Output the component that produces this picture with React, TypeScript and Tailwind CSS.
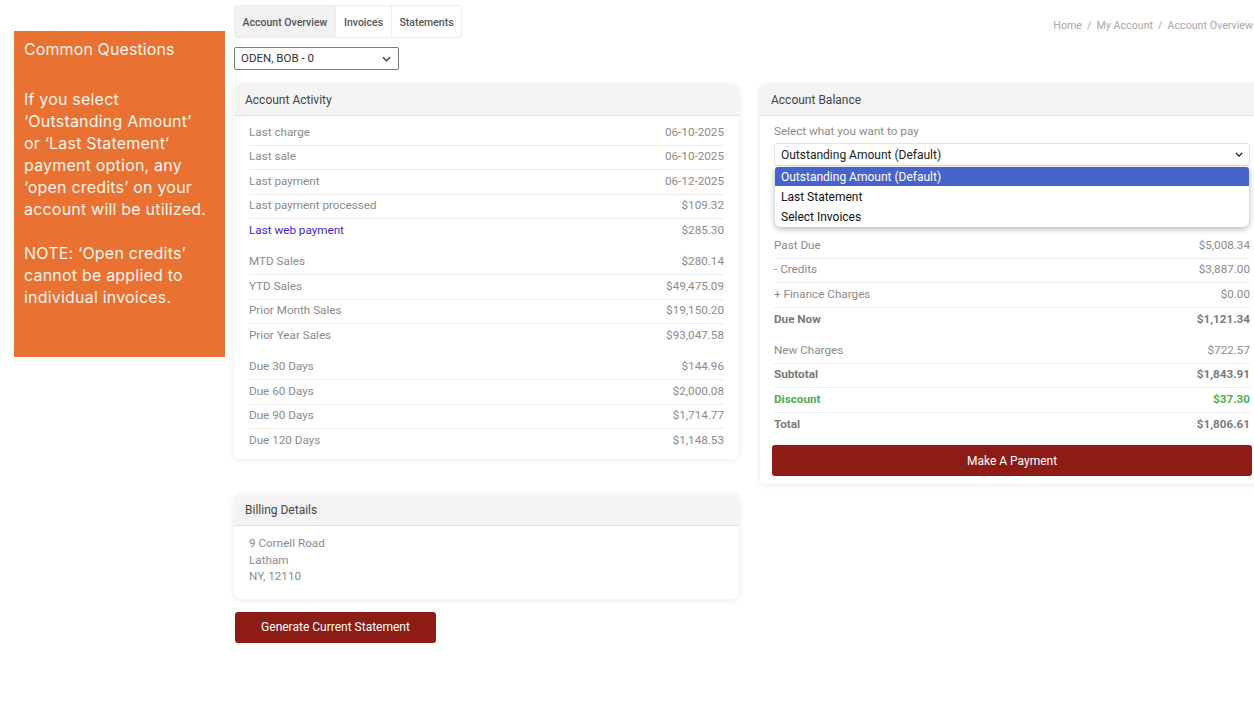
import React from "react";

type Row = { label: string; value: string; bold?: boolean; green?: boolean; link?: boolean };

const activityGroups: Row[][] = [
  [
    { label: "Last charge", value: "06-10-2025" },
    { label: "Last sale", value: "06-10-2025" },
    { label: "Last payment", value: "06-12-2025" },
    { label: "Last payment processed", value: "$109.32" },
    { label: "Last web payment", value: "$285.30", link: true },
  ],
  [
    { label: "MTD Sales", value: "$280.14" },
    { label: "YTD Sales", value: "$49,475.09" },
    { label: "Prior Month Sales", value: "$19,150.20" },
    { label: "Prior Year Sales", value: "$93,047.58" },
  ],
  [
    { label: "Due 30 Days", value: "$144.96" },
    { label: "Due 60 Days", value: "$2,000.08" },
    { label: "Due 90 Days", value: "$1,714.77" },
    { label: "Due 120 Days", value: "$1,148.53" },
  ],
];

const balanceGroups: Row[][] = [
  [
    { label: "Past Due", value: "$5,008.34" },
    { label: "- Credits", value: "$3,887.00" },
    { label: "+ Finance Charges", value: "$0.00" },
    { label: "Due Now", value: "$1,121.34", bold: true },
  ],
  [
    { label: "New Charges", value: "$722.57" },
    { label: "Subtotal", value: "$1,843.91", bold: true },
    { label: "Discount", value: "$37.30", bold: true, green: true },
    { label: "Total", value: "$1,806.61", bold: true },
  ],
];

function Group({ rows, className = "" }: { rows: Row[]; className?: string }) {
  return (
    <div className={className}>
      {rows.map((r, i) => {
        const color = r.green
          ? "text-[#4caf50] font-bold"
          : r.bold
          ? "text-[#7a7a7a] font-bold"
          : "text-[#8c8c8c]";
        return (
          <div
            key={r.label}
            className={`flex h-[24.5px] items-center justify-between text-[11.7px] ${
              i < rows.length - 1 ? "border-b border-[#ececec]" : ""
            }`}
          >
            <span className={r.link ? "text-[#3d1fd6]" : color}>{r.label}</span>
            <span className={color}>{r.value}</span>
          </div>
        );
      })}
    </div>
  );
}

function CardHeader({ title }: { title: string }) {
  return (
    <div className="flex h-[32px] items-center border-b border-[#e2e2e2] bg-[#f4f4f4] px-[11px] text-[12px] text-[#444]">
      {title}
    </div>
  );
}

function Chevron({ className = "" }: { className?: string }) {
  return (
    <svg viewBox="0 0 10 6" className={className} fill="none" stroke="currentColor" strokeWidth="1.6">
      <path d="M1 1l4 4 4-4" />
    </svg>
  );
}

export default function App() {
  return (
    <div className="flex h-[705px] w-[1254px] overflow-hidden bg-white font-['Roboto',sans-serif]">
      <aside className="ml-[14px] mt-[31px] h-[326px] w-[211px] shrink-0 bg-[#E97132] px-[10px] pt-[7px] font-['Inter',sans-serif] text-[16px] leading-[22px] tracking-[0.2px] text-[#fdf4ec]">
        <div className="text-[16px] tracking-[0.1px]">Common Questions</div>
        <p className="mt-[28px] whitespace-nowrap">
          If you select
          <br />
          ‘Outstanding Amount’
          <br />
          or ‘Last Statement’
          <br />
          payment option, any
          <br />
          ‘open credits’ on your
          <br />
          account will be utilized.
        </p>
        <p className="mt-[22px] whitespace-nowrap">
          NOTE: ‘Open credits’
          <br />
          cannot be applied to
          <br />
          individual invoices.
        </p>
      </aside>

      <main className="ml-[9px] w-[1020px] shrink-0">
        <div className="flex items-start justify-between">
          <div className="mt-[5px] flex h-[33px] text-[10.5px] font-medium text-[#555]">
            <div className="flex w-[102px] items-center justify-center rounded-l-[3px] border border-[#ececec] bg-[#f2f2f2] pt-[2px]">
              Account Overview
            </div>
            <div className="flex w-[56px] items-center justify-center border-y border-r border-[#ececec] pt-[2px]">
              Invoices
            </div>
            <div className="flex w-[70px] items-center justify-center rounded-r-[3px] border-y border-r border-[#ececec] pt-[2px]">
              Statements
            </div>
          </div>
          <div className="pr-[1px] pt-[18px] text-[10.7px] text-[#a9a9a9]">
            Home<span className="mx-[5px]">/</span>My Account<span className="mx-[5px]">/</span>Account Overview
          </div>
        </div>

        <div className="mt-[9px] flex h-[23px] w-[165px] items-center justify-between rounded-[2px] border border-[#7a7a7a] pl-[6px] pr-[7px] pt-[1px] text-[11.5px] text-[#333]">
          <span>ODEN, BOB - 0</span>
          <Chevron className="h-[6px] w-[9px] text-[#444]" />
        </div>

        <div className="mt-[14px] flex items-start gap-[21px]">
          <div className="w-[505px] shrink-0">
            <section className="overflow-hidden rounded-[6px] bg-white shadow-[0_1px_6px_rgba(0,0,0,0.09)]">
              <CardHeader title="Account Activity" />
              <div className="px-[15px] pb-[5.5px] pt-[5px]">
                <Group rows={activityGroups[0]} className="mb-[7px]" />
                <Group rows={activityGroups[1]} className="mb-[7px]" />
                <Group rows={activityGroups[2]} />
              </div>
            </section>

            <section className="mt-[35px] overflow-hidden rounded-[6px] bg-white shadow-[0_1px_6px_rgba(0,0,0,0.09)]">
              <CardHeader title="Billing Details" />
              <div className="px-[15px] pb-[14px] pt-[9px] text-[11.7px] leading-[16.5px] text-[#8c8c8c]">
                <div>9 Cornell Road</div>
                <div>Latham</div>
                <div>NY, 12110</div>
              </div>
            </section>

            <button className="ml-[1px] mt-[13px] flex h-[31px] w-[201px] items-center justify-center rounded-[3px] bg-[#8c1c15] text-[12px] text-white">
              Generate Current Statement
            </button>
          </div>

          <section className="w-[504px] shrink-0 rounded-[6px] bg-white shadow-[0_1px_6px_rgba(0,0,0,0.09)]">
            <div className="overflow-hidden rounded-t-[6px]">
              <CardHeader title="Account Balance" />
            </div>
            <div className="px-[14px] pb-[8px] pt-[7px]">
              <div className="text-[11.7px] leading-[16px] text-[#8c8c8c]">Select what you want to pay</div>
              <div className="relative mt-[4px]">
                <div className="flex h-[23px] items-center justify-between rounded-[3px] border border-[#e4e4e4] pl-[6px] pr-[6px] text-[12px] text-[#222]">
                  <span>Outstanding Amount (Default)</span>
                  <Chevron className="h-[5px] w-[8px] text-[#111]" />
                </div>
                <div className="absolute left-[1px] top-[24px] z-10 w-[474px] overflow-hidden rounded-b-[6px] rounded-t-[3px] bg-white text-[12px] text-[#111] shadow-[0_2px_6px_rgba(0,0,0,0.3)]">
                  <div className="flex h-[19px] items-center bg-[#4863cc] px-[6px] text-white">Outstanding Amount (Default)</div>
                  <div className="flex h-[20px] items-center px-[6px] pt-[1px]">Last Statement</div>
                  <div className="flex h-[21px] items-center px-[6px] pt-[1px]">Select Invoices</div>
                </div>
              </div>
              <div className="h-[68px]" />
              <Group rows={balanceGroups[0]} className="mb-[7px]" />
              <Group rows={balanceGroups[1]} />
              <button className="-ml-[2px] mt-[8px] flex h-[31px] w-[480px] items-center justify-center rounded-[3px] bg-[#8c1c15] text-[12px] text-white">
                Make A Payment
              </button>
            </div>
          </section>
        </div>
      </main>
    </div>
  );
}
